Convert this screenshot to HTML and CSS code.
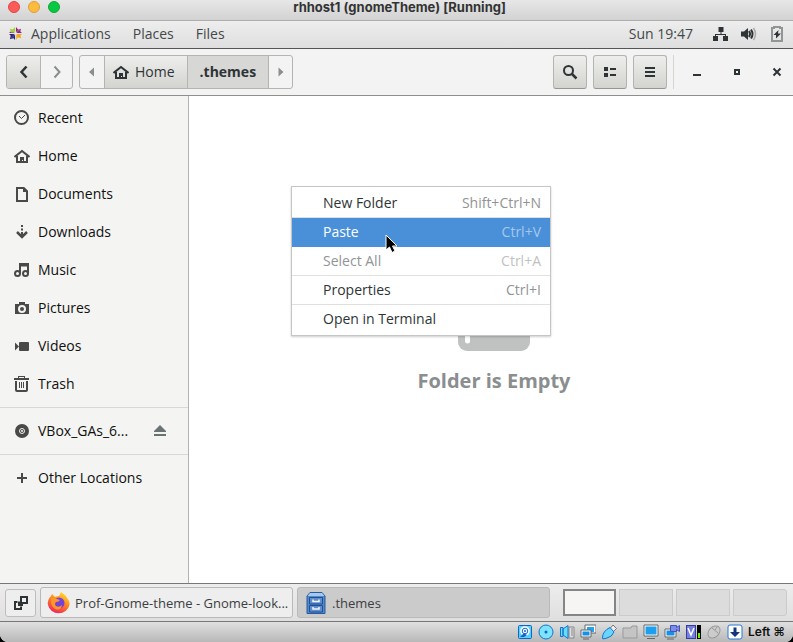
FILE: index.html
```html
<!DOCTYPE html>
<html lang="en">
<head>
<meta charset="utf-8">
<title>rhhost1 (gnomeTheme) [Running]</title>
<link rel="stylesheet" href="styles.css">
</head>
<body>
<svg class="defs" aria-hidden="true">
  <symbol id="home" viewBox="0 0 16 16"><path d="M.5 9 8 3l7.500 6" fill="none" stroke="currentColor" stroke-width="2"/><path d="M3 8v6h10V8" fill="none" stroke="currentColor" stroke-width="2"/><path d="M6 9h4v5H9v-2H8v2H6z" fill="currentColor"/></symbol>
</svg>
<div class="window">
  <header class="titlebar">
    <div class="lights"><span class="light red"></span><span class="light amber"></span><span class="light green"></span></div>
    <h1>rhhost1 (gnomeTheme) [Running]</h1>
  </header>

  <nav class="panel">
    <svg class="distro" viewBox="0 0 16 16"><path d="M7.500 7 5 4l2.500-3z" fill="#9ccd2a"/><path d="M8.500 7 11 4 8.500 1z" fill="#932279"/><path d="M9 7l1-3 4-1-1 4z" fill="#a14f8c"/><path d="M9 7.500 12 5l3 2.500z" fill="#932279"/><path d="M9 8.500 12 11l3-2.500z" fill="#efa724"/><path d="M9 9l4 0 1 4-4-1z" fill="#efa724"/><path d="M8.500 9 11 12l-2.500 3z" fill="#f5b83d"/><path d="M7.500 9 5 12l2.500 3z" fill="#262577"/><path d="M7 9l-1 4-4 1 1-5z" fill="#3c3b8c"/><path d="M7 8.500 4 11 1 8.500z" fill="#262577"/><path d="M7 7.500 4 5 1 7.500z" fill="#932279"/><path d="M7 7 3 7 2 3l4 1z" fill="#a8cf45"/></svg>
    <a href="#">Applications</a><a href="#">Places</a><a href="#">Files</a>
    <time>Sun 19:47</time>
    <svg class="net" viewBox="0 0 16 16"><path d="M5.500 1h5v5h-5zM0 10h5v5H0zM10 10h5v5h-5zM7.500 6h1v2H13v2h-1V9H3v1H2V8h5.500z" fill="#2e3436"/></svg>
    <svg viewBox="0 0 16 16"><path d="M0 5.500h3L7 2v12L3 10.500H0z" fill="#2e3436"/><path d="M8 5q2 3 0 6M10 3.500q3 4.500 0 9" fill="none" stroke="#2e3436" stroke-width="2"/><path d="M12.500 2q4 6 0 12" fill="none" stroke="#aaa" stroke-width="1.500"/></svg>
    <svg class="battery" viewBox="0 0 16 16"><path d="M5 2V1h6v1h2v13H3V2z" fill="none" stroke="#929595" stroke-width="2"/><path d="M9.500 4 4.500 9H7v3.500L12 7.500H9z" fill="#2e3436"/></svg>
  </nav>

  <div class="toolbar">
    <div class="group">
      <button class="raised nav" aria-label="Back"><svg viewBox="0 0 16 16"><path d="m10.500 2.500-5 5.500 5 5.500" fill="none" stroke="currentColor" stroke-width="2.500"/></svg></button>
      <button class="nav dim" aria-label="Forward"><svg viewBox="0 0 16 16"><path d="m5.500 2.500 5 5.500-5 5.500" fill="none" stroke="currentColor" stroke-width="2"/></svg></button>
    </div>
    <div class="group">
      <button class="arrow dim" aria-label="Previous path"><svg viewBox="0 0 16 16"><path d="m10 3.500-5 4.500 5 4.500z" fill="currentColor"/></svg></button>
      <button class="raised crumb"><svg viewBox="0 0 16 16"><use href="#home"/></svg>Home</button>
      <button class="crumb current">.themes</button>
      <button class="arrow dim" aria-label="Next path"><svg viewBox="0 0 16 16"><path d="m5.500 3.500 5 4.500-5 4.500z" fill="currentColor"/></svg></button>
    </div>
    <div class="tools">
      <button class="raised tool" aria-label="Search"><svg viewBox="0 0 16 16"><circle cx="6.500" cy="6.500" r="4.500" fill="none" stroke="currentColor" stroke-width="2"/><path d="m10 10 4.500 4.500" stroke="currentColor" stroke-width="2.500"/></svg></button>
      <button class="raised tool" aria-label="View as list"><svg viewBox="0 0 16 16"><path d="M2 3h4v4H2zM2 9h4v4H2zM8 4h6v2H8zM8 10h6v2H8z" fill="currentColor"/></svg></button>
      <button class="raised tool" aria-label="Menu"><svg viewBox="0 0 16 16"><path d="M3 3h10v2H3zM3 7h10v2H3zM3 11h10v2H3z" fill="currentColor"/></svg></button>
    </div>
    <div class="controls">
      <button aria-label="Minimize"><svg viewBox="0 0 16 16"><path d="M4 10h8v2H4z" fill="currentColor"/></svg></button>
      <button aria-label="Maximize"><svg viewBox="0 0 16 16"><path d="M6 6h4v4H6z" fill="none" stroke="currentColor" stroke-width="2"/></svg></button>
      <button aria-label="Close"><svg viewBox="0 0 16 16"><path d="m4.500 4.500 7 7m0-7-7 7" fill="none" stroke="currentColor" stroke-width="2"/></svg></button>
    </div>
  </div>

  <div class="body">
    <aside class="sidebar">
      <a href="#"><svg viewBox="0 0 16 16"><circle cx="7.500" cy="7.500" r="6.500" fill="none" stroke="currentColor" stroke-width="2"/><path d="M5 6 7.500 8.500 11 5" fill="none" stroke="currentColor"/></svg>Recent</a>
      <a href="#"><svg viewBox="0 0 16 16"><use href="#home"/></svg>Home</a>
      <a href="#"><svg viewBox="0 0 16 16"><path d="M3 2h6.500L13 5.500V15H3z" fill="none" stroke="currentColor" stroke-width="2"/><path d="M9 1v5h5V5l-4-4z" fill="currentColor"/></svg>Documents</a>
      <a href="#"><svg viewBox="0 0 16 16"><path d="M7 1h2v2H7zM7 4.500h2v2H7zM7 8h2v4H7z" fill="currentColor"/><path d="M3 8l5 5 5-5" fill="none" stroke="currentColor" stroke-width="2.500"/></svg>Downloads</a>
      <a href="#"><svg viewBox="0 0 16 16"><path d="M6 11V2h8v9M6 3.500h8" fill="none" stroke="currentColor" stroke-width="2"/><circle cx="3.500" cy="11.500" r="2.500" fill="none" stroke="currentColor" stroke-width="2"/><circle cx="11.500" cy="11.500" r="2.500" fill="none" stroke="currentColor" stroke-width="2"/></svg>Music</a>
      <a href="#"><svg viewBox="0 0 16 16"><path d="M1 4h4V2h6v2h4v10H1z" fill="currentColor"/><circle cx="8" cy="9" r="3" fill="none" stroke="#f4f4f2" stroke-width="2"/></svg>Pictures</a>
      <a href="#"><svg viewBox="0 0 16 16"><rect x="5" y="4" width="10" height="9" rx="1" fill="currentColor"/><path d="M1 4.500v8l4-4z" fill="currentColor"/></svg>Videos</a>
      <a href="#"><svg viewBox="0 0 16 16"><path d="M0 2h4V0h7v2h4v2H0zM5 1v1h5V1z" fill="currentColor" fill-rule="evenodd"/><path d="M2 5v9q0 1 1 1h9q1 0 1-1V5" fill="none" stroke="currentColor" stroke-width="2"/><path d="M5.500 6v6M7.500 6v6M9.500 6v6" stroke="currentColor"/></svg>Trash</a>
      <hr>
      <a href="#"><svg viewBox="0 0 16 16"><circle cx="8" cy="8" r="7" fill="currentColor"/><circle cx="8" cy="8" r="2.500" fill="none" stroke="#f4f4f2"/><circle cx="8" cy="8" r="1" fill="#f4f4f2"/></svg><span class="volume">VBox_GAs_6...</span><svg class="eject" viewBox="0 0 16 16"><path d="M8 2 14 8v1H2V8zM2 11h12v2H2z" fill="currentColor"/></svg></a>
      <hr>
      <a href="#"><svg viewBox="0 0 16 16"><path d="M8 3v10M3 8h10" stroke="currentColor" stroke-width="2"/></svg>Other Locations</a>
    </aside>

    <main class="files">
      <svg class="folder" viewBox="0 0 72 72"><path d="M10 2h18l6 8h28q5 0 5 5v15H5V7q0-5 5-5z" fill="#d8d9d9"/><rect y="24" width="72" height="48" rx="9" fill="#c0c2c2"/><path d="M9.500 48v14" stroke="#fff" stroke-width="5" stroke-linecap="round"/></svg>
      <p>Folder is Empty</p>
      <ul class="menu">
        <li class="rule"><button>New Folder<kbd>Shift+Ctrl+N</kbd></button></li>
        <li class="active"><button>Paste<kbd>Ctrl+V</kbd></button></li>
        <li class="rule"><button disabled>Select All<kbd>Ctrl+A</kbd></button></li>
        <li class="rule"><button>Properties<kbd>Ctrl+I</kbd></button></li>
        <li><button>Open in Terminal</button></li>
      </ul>
      <svg class="cursor" viewBox="0 0 14 20"><path d="M1 1v15l3.500-3 2.500 5.500 3-1.500-2.500-5H12z" fill="#000" stroke="#fff"/></svg>
    </main>
  </div>

  <footer class="taskbar">
    <button class="switch" aria-label="Show desktop"><svg viewBox="0 0 16 16"><path d="M8 2h6v6H8zM4.500 7H2v7h6v-2.500M6 6.500v3.500h4" fill="none" stroke="#2e3436" stroke-width="2"/></svg></button>
    <button class="task"><svg viewBox="0 0 24 24">
      <defs><linearGradient id="fox" x1=".8" y1="0" x2=".3" y2="1"><stop offset="0" stop-color="#ffe638"/><stop offset=".45" stop-color="#ff8a1e"/><stop offset="1" stop-color="#f02060"/></linearGradient></defs>
      <path d="M14 1q6 4 6 6 3 3 2.500 7A11 10.500 0 0 1 1 14Q0 9 4 5l1-2 3 3q2-1 4-1z" fill="url(#fox)"/><circle cx="12" cy="12" r="5.500" fill="#7542d8"/><path d="M4 7q4-1 6 1l3 1q-1 2-4 2-2 2 0 4 3 2 6-1-1 6-7 4-5-3-4-11z" fill="#ff9626"/></svg><span>Prof-Gnome-theme - Gnome-look...</span></button>
    <button class="task selected"><svg viewBox="0 0 24 24"><path d="M3 5 6 1.500h12L21 5v17.500H3z" fill="#5189c9" stroke="#275a9f"/><path d="M6 2h12l2.500 3h-17z" fill="#a4c8ef"/><path d="M5.500 6.500h13v6.500h-13zM5.500 14.500h13v6.500h-13z" fill="#5c8ed1" stroke="#244f91"/><path d="M9 8.500v2h6v-2M9 16v2h6v-2" fill="none" stroke="#f5f5ee" stroke-width="1.500"/></svg><span>.themes</span></button>
    <div class="pager"><span class="on"></span><span></span><span></span><span></span></div>
  </footer>

  <div class="status">
    <svg viewBox="0 0 16 16"><rect x="1.500" y="1.500" width="13" height="13" rx="1" fill="#50d4ff" stroke="#1464c8"/><circle cx="8" cy="7" r="4.800" fill="#fff"/><circle cx="8" cy="7" r="2.800" fill="none" stroke="#1464c8"/><circle cx="8" cy="7" r="1" fill="#1464c8"/><path d="m7 9-4 4h4l3-2z" fill="#1464c8"/></svg>
    <svg viewBox="0 0 16 16"><circle cx="8" cy="8" r="7" fill="#7ce4ff" stroke="#1673d0"/><circle cx="8" cy="8" r="1.500" fill="#1464c8"/></svg>
    <svg viewBox="0 0 16 16"><path d="M10 3h5v11h-5zM12 5h2M12 7h2M12 9h2M12 11h2" fill="#ddd" stroke="#888"/><path d="M1.500 3.500H4v9H1.500zM4 5l5-3.500v13L4 11z" fill="#68dcff" stroke="#1673d0"/></svg>
    <svg viewBox="0 0 16 16"><path d="M5 1h11v8H5z" fill="#fff" stroke="#666"/><path d="M7 3h7v5H7z" fill="#1da6ef"/><path d="M1 6h10v7H1zM3 15h6" fill="#fff" stroke="#666"/><path d="M2.500 7.500h7v4h-7z" fill="#1492e6"/></svg>
    <svg viewBox="0 0 16 16"><path d="M9 4.500 12 1l3.500 3.500L12 8z" fill="#eee" stroke="#777"/><path d="M9 3.500 13 8q-2 5-7 6l-4 1-.5-1q0-7 7.500-10.500z" fill="#68d6ff" stroke="#1673d0"/></svg>
    <svg viewBox="0 0 16 16"><path d="M1 14V4h8l1-2h5v12z" fill="#c4c4c4" stroke="#999"/></svg>
    <svg viewBox="0 0 16 16"><path d="M1 1h14v11H1zM4 14.500h8" fill="#fff" stroke="#666"/><path d="M2.500 2.500h11v8h-11z" fill="#1c9fee"/></svg>
    <svg viewBox="0 0 16 16"><path d="M1 5h11v8H1zM3 15h7" fill="#fff" stroke="#666"/><path d="M2.500 6.500h8v5h-8z" fill="#1492e6"/><path d="M6.500 1.500h6v2l3-2v6l-3-2v2h-6z" fill="#7c8ce8" stroke="#4054b8"/></svg>
    <svg viewBox="0 0 16 16"><rect x="1" y="1" width="10" height="14" fill="#343f9b"/><rect x="2" y="2" width="8" height="12" fill="#7480dc"/><path d="m3 4 3 7 3-7" fill="none" stroke="#fff" stroke-width="1.500"/><path d="M12 1h4v14h-4z"/><path d="M13 9h2v5h-2z" fill="#70f000"/></svg>
    <svg viewBox="0 0 16 16"><ellipse cx="8" cy="8" rx="7" ry="5" transform="rotate(-45 8 8)" fill="#ccc" stroke="#999"/><path d="m6 4 6 5m-3-3 2-3" fill="none" stroke="#999"/></svg>
    <svg viewBox="0 0 16 16"><rect x="1" y="1" width="14" height="14" rx="2" fill="#fff" stroke="#2778d8"/><path d="M6.500 3.500h3V8H13l-5 5-5-5h3.500z" fill="#12357e"/></svg>
    <span>Left ⌘</span>
  </div>
</div>
</body>
</html>
```
FILE: styles.css
```css
* { box-sizing: border-box; }
body { margin: 0; background: #000; font: 14px/20px "Open Sans", sans-serif; color: #2e3436; }
button { font: inherit; color: inherit; background: none; border: 0; padding: 0; margin: 0; }
a { color: inherit; text-decoration: none; }
svg { width: 16px; height: 16px; flex: none; display: block; }
.defs { display: none; }
.window { min-height: 100vh; display: flex; flex-direction: column; background: #f3f3f2; border-radius: 0 0 8px 8px; overflow: hidden; }

.titlebar { position: relative; height: 21px; flex: none; background: linear-gradient(#e7e7e7, #d2d2d2); border-bottom: 1px solid #adadad; }
.titlebar h1 { margin: 0; padding-left: 6px; text-align: center; font: 700 13px/14px Inter, sans-serif; color: #333; }
.lights { position: absolute; left: 8px; top: 1px; display: flex; gap: 8px; }
.light { width: 12px; height: 12px; border-radius: 50%; border: 1px solid; }
.red { background: #fc5b57; border-color: #df4744; }
.amber { background: #fdbb40; border-color: #de9f34; }
.green { background: #05c844; border-color: #14a834; }

.panel { height: 28px; flex: none; display: flex; align-items: center; padding: 0 8px 2px; background: linear-gradient(#ededed, #dfdfdf); border-bottom: 1px solid #555; color: #43484a; }
.distro { width: 15px; height: 15px; margin-right: 8px; }
.panel a { margin-right: 22px; }
.panel time { margin-left: auto; margin-right: 20px; }
.panel .net { margin-right: 12px; }
.panel .battery { margin-left: 12px; }

.toolbar { height: 47px; flex: none; display: flex; align-items: center; gap: 6px; padding: 0 6px; background: #f3f3f3; border-bottom: 1px solid #8c8f8a; }
.group { display: flex; height: 34px; border: 1px solid #b4b4b0; border-radius: 3px; overflow: hidden; }
.group button + button { border-left: 1px solid #b4b4b0; }
.group button, .tool { display: flex; align-items: center; justify-content: center; }
.raised { background: linear-gradient(#eeeeec, #d3d3d0); }
.nav { width: 33px; }
.group .nav.dim { width: 32px; }
.dim { color: #8b8e8f; }
.arrow { width: 24px; }
.crumb { padding: 0 12px 0 8px; gap: 6px; }
.crumb.current { padding: 0 12px; background: #d7d7d5; font-weight: 700; }
.tools { margin-left: auto; display: flex; gap: 6px; padding-right: 6px; border-right: 1px solid #d5d5d3; height: 34px; }
.tool { width: 34px; border: 1px solid #b4b4b0; border-bottom-color: #969690; border-radius: 3px; }
.controls { display: flex; gap: 24px; padding: 0 2px 0 9px; }

.body { flex: 1; display: flex; background: #fff; }
.sidebar { width: 189px; flex: none; padding: 3px 0; background: #f4f4f2; border-right: 1px solid #b2b4b0; color: #101010; }
.sidebar a { height: 38px; display: flex; align-items: center; gap: 8px; padding-left: 14px; }
.sidebar svg { color: #494a48; }
.sidebar hr { margin: 4px 0; border: 0; border-top: 1px solid #d8d9d7; }
.volume { width: 106px; }
.sidebar .eject { color: #6b7274; }

.files { position: relative; flex: 1; display: flex; flex-direction: column; align-items: center; justify-content: center; padding: 0 0 6px 6px; }
.folder { width: 72px; height: 72px; }
.files p { margin: 16px 0 0; font-size: 20px; line-height: 28px; font-weight: 700; color: #8b8e8f; }
.menu { position: absolute; left: 102px; top: 90px; width: 260px; margin: 0; padding: 2px 0; list-style: none; background: #fff; border: 1px solid #c5c7c5; box-shadow: 0 1px 2px #0003; }
.menu li { border-bottom: 1px solid transparent; }
.menu li.rule { border-color: #e0e0e0; }
.menu li:last-child { border-bottom: 0; }
.menu button { width: 100%; height: 28px; display: flex; justify-content: space-between; align-items: center; padding: 0 9px 0 31px; }
.menu kbd { font: inherit; color: #919495; }
.menu button:disabled { color: #919495; }
.menu button:disabled kbd { color: #c0c2c2; }
.menu .active { background: #4a90d9; color: #fff; }
.menu .active kbd { color: #a4c7ec; }
.cursor { position: absolute; left: 196px; top: 138px; width: 14px; height: 20px; }

.taskbar { height: 39px; flex: none; display: flex; align-items: center; gap: 4px; padding: 0 6px 0 5px; border-top: 1px solid #777; border-bottom: 1px solid #777; background: linear-gradient(#ededed, #dfdfdf); font-size: 13px; color: #3b4042; }
.switch { width: 31px; height: 28px; display: grid; place-items: center; border: 1px solid #bdbdbd; border-radius: 3px; background: #eee; }
.task { flex: 0 1 253px; min-width: 0; height: 31px; display: flex; align-items: center; gap: 4px; padding: 0 6px; border: 1px solid #b9b9b9; border-radius: 3px; background: #eee; white-space: nowrap; }
.task svg { width: 24px; height: 24px; }
.selected { background: #cbcbcb; }
.pager { margin-left: auto; display: flex; gap: 3px; }
.pager span { width: 54px; height: 27px; border: 1px solid #cbcbcb; background: #dcdcdc; }
.pager .on { width: 53px; background: #f6f5f3; border: 2px solid #858585; }
.pager span:last-child { border-radius: 0 3px 3px 0; }

.status { height: 20px; flex: none; display: flex; align-items: center; justify-content: flex-end; gap: 5px; padding-right: 6px; background: linear-gradient(#e0e0e0, #b8b8b8); font: 600 12px/16px Inter, "DejaVu Sans", sans-serif; color: #111; }
.status span { min-width: 39px; }
```
